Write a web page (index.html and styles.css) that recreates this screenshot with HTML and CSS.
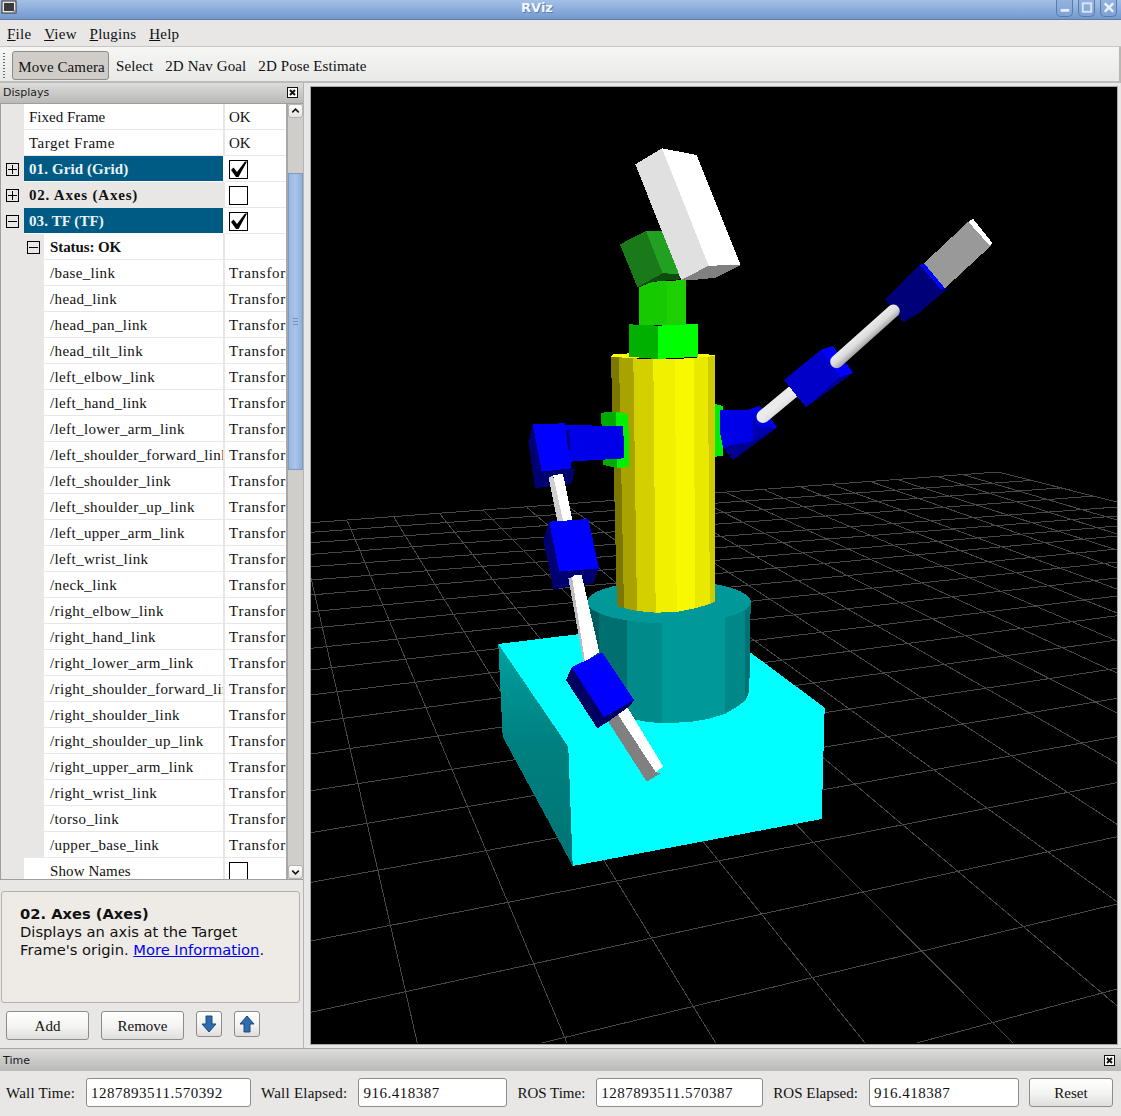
FILE: index.html
```html
<!DOCTYPE html>
<html lang="en">
<head>
<meta charset="utf-8">
<title>RViz</title>
<link rel="stylesheet" href="styles.css">
</head>
<body>
<div class="app">
  <header class="titlebar">
    <svg class="wm-icon" width="17" height="15" viewBox="0 0 17 15"><rect x="1" y="1" width="14" height="12" fill="#e8e8e8" stroke="#333"/><rect x="3" y="3" width="10" height="8" fill="#3a3a3a"/><path d="M15 9l-4 4h4z" fill="#888"/></svg>
    <span class="title-text">RViz</span>
    <div class="wm-buttons">
      <span class="wm-btn"><svg width="16" height="16" viewBox="0 0 16 16"><rect x="4" y="9" width="9" height="3" fill="#e8eef8"/></svg></span>
      <span class="wm-btn"><svg width="16" height="16" viewBox="0 0 16 16"><rect x="4" y="3" width="9" height="9" fill="none" stroke="#dbe5f4" stroke-width="2"/></svg></span>
      <span class="wm-btn"><svg width="16" height="16" viewBox="0 0 16 16"><path d="M4 3l9 9M13 3l-9 9" stroke="#eef3fa" stroke-width="2.6"/></svg></span>
    </div>
  </header>

  <nav class="menubar">
    <span class="menu"><u>F</u>ile</span>
    <span class="menu"><u>V</u>iew</span>
    <span class="menu"><u>P</u>lugins</span>
    <span class="menu"><u>H</u>elp</span>
  </nav>

  <div class="toolbar">
    <span class="grip"></span>
    <span class="tool tool-active">Move Camera</span>
    <span class="tool">Select</span>
    <span class="tool">2D Nav Goal</span>
    <span class="tool">2D Pose Estimate</span>
  </div>

  <main class="main">
    <aside class="left">
      <div class="dock-head"><span>Displays</span><span class="dock-close"><svg width="11" height="11" viewBox="0 0 11 11"><rect x="0.5" y="0.5" width="10" height="10" fill="#fff" stroke="#111"/><path d="M3 3l5 5M8 3l-5 5" stroke="#111" stroke-width="2"/></svg></span></div>
      <div class="tree-wrap">
        <div class="tree">
          <div class="row"><span class="gutter g0"></span><span class="name">Fixed Frame</span><span class="val">OK</span></div>
          <div class="row"><span class="gutter g0"></span><span class="name wide">Target Frame</span><span class="val">OK</span></div>
          <div class="row"><span class="gutter g0"><i class="exp plus"></i></span><span class="name strong sel">01. Grid (Grid)</span><span class="val"><span class="check"><svg width="17" height="17" viewBox="0 0 17 17"><path d="M1 9L3.500 6.500L7 11L15 0.500L17 0.500L8.500 16L6 16Z" fill="#000"/></svg></span></span></div>
          <div class="row"><span class="gutter g0"><i class="exp plus"></i></span><span class="name strong grey wider">02. Axes (Axes)</span><span class="val"><span class="check"></span></span></div>
          <div class="row"><span class="gutter g0"><i class="exp"></i></span><span class="name strong sel">03. TF (TF)</span><span class="val"><span class="check"><svg width="17" height="17" viewBox="0 0 17 17"><path d="M1 9L3.500 6.500L7 11L15 0.500L17 0.500L8.500 16L6 16Z" fill="#000"/></svg></span></span></div>
          <div class="row"><span class="gutter g1"><i class="exp"></i></span><span class="name strong">Status: OK</span><span class="val"></span></div>
          <div class="row"><span class="gutter g2"></span><span class="name">/base_link</span><span class="val">Transform OK</span></div>
          <div class="row"><span class="gutter g2"></span><span class="name">/head_link</span><span class="val">Transform OK</span></div>
          <div class="row"><span class="gutter g2"></span><span class="name">/head_pan_link</span><span class="val">Transform OK</span></div>
          <div class="row"><span class="gutter g2"></span><span class="name">/head_tilt_link</span><span class="val">Transform OK</span></div>
          <div class="row"><span class="gutter g2"></span><span class="name">/left_elbow_link</span><span class="val">Transform OK</span></div>
          <div class="row"><span class="gutter g2"></span><span class="name">/left_hand_link</span><span class="val">Transform OK</span></div>
          <div class="row"><span class="gutter g2"></span><span class="name">/left_lower_arm_link</span><span class="val">Transform OK</span></div>
          <div class="row"><span class="gutter g2"></span><span class="name">/left_shoulder_forward_link</span><span class="val">Transform OK</span></div>
          <div class="row"><span class="gutter g2"></span><span class="name">/left_shoulder_link</span><span class="val">Transform OK</span></div>
          <div class="row"><span class="gutter g2"></span><span class="name">/left_shoulder_up_link</span><span class="val">Transform OK</span></div>
          <div class="row"><span class="gutter g2"></span><span class="name">/left_upper_arm_link</span><span class="val">Transform OK</span></div>
          <div class="row"><span class="gutter g2"></span><span class="name">/left_wrist_link</span><span class="val">Transform OK</span></div>
          <div class="row"><span class="gutter g2"></span><span class="name">/neck_link</span><span class="val">Transform OK</span></div>
          <div class="row"><span class="gutter g2"></span><span class="name">/right_elbow_link</span><span class="val">Transform OK</span></div>
          <div class="row"><span class="gutter g2"></span><span class="name">/right_hand_link</span><span class="val">Transform OK</span></div>
          <div class="row"><span class="gutter g2"></span><span class="name">/right_lower_arm_link</span><span class="val">Transform OK</span></div>
          <div class="row"><span class="gutter g2"></span><span class="name">/right_shoulder_forward_link</span><span class="val">Transform OK</span></div>
          <div class="row"><span class="gutter g2"></span><span class="name">/right_shoulder_link</span><span class="val">Transform OK</span></div>
          <div class="row"><span class="gutter g2"></span><span class="name">/right_shoulder_up_link</span><span class="val">Transform OK</span></div>
          <div class="row"><span class="gutter g2"></span><span class="name">/right_upper_arm_link</span><span class="val">Transform OK</span></div>
          <div class="row"><span class="gutter g2"></span><span class="name">/right_wrist_link</span><span class="val">Transform OK</span></div>
          <div class="row"><span class="gutter g2"></span><span class="name">/torso_link</span><span class="val">Transform OK</span></div>
          <div class="row"><span class="gutter g2"></span><span class="name">/upper_base_link</span><span class="val">Transform OK</span></div>
          <div class="row"><span class="gutter g0"></span><span class="name indent">Show Names</span><span class="val"><span class="check"></span></span></div>
        </div>
        <div class="scrollbar">
          <span class="sb-arrow"><svg width="14" height="12" viewBox="0 0 14 12"><path d="M3.500 7.500L7 4l3.500 3.500" fill="none" stroke="#111" stroke-width="1.600"/></svg></span>
          <span class="sb-track"><span class="sb-thumb"><i class="sb-dots"></i></span></span>
          <span class="sb-arrow"><svg width="14" height="12" viewBox="0 0 14 12"><path d="M3.500 4.500L7 8l3.500-3.500" fill="none" stroke="#111" stroke-width="1.600"/></svg></span>
        </div>
      </div>
      <section class="desc">
        <strong>02. Axes (Axes)</strong><br>
        Displays an axis at the Target<br>
        Frame's origin. <a href="#">More Information</a>.
      </section>
      <div class="actions">
        <button class="btn btn-wide">Add</button>
        <button class="btn btn-wide">Remove</button>
        <button class="btn btn-icon"><svg width="16" height="18" viewBox="0 0 16 18"><path d="M5 1h6v8h4l-7 8-7-8h4z" fill="#2f6cad" stroke="#1d4a7c"/></svg></button>
        <button class="btn btn-icon"><svg width="16" height="18" viewBox="0 0 16 18"><path d="M5 17h6V9h4L8 1 1 9h4z" fill="#2f6cad" stroke="#1d4a7c"/></svg></button>
      </div>
    </aside>
    <span class="splitter"></span>
    <div class="view">
      <svg class="scene" width="806" height="957" viewBox="311 87 806 957">
        <defs>
          <linearGradient id="rod" gradientUnits="userSpaceOnUse" x1="832.400" y1="356.800" x2="841" y2="366.600"><stop offset="0" stop-color="#ebebeb"/><stop offset="0.5" stop-color="#dcdcdc"/><stop offset="1" stop-color="#a0a0a0"/></linearGradient>
          <linearGradient id="baseside" x1="0" y1="0" x2="0" y2="1"><stop offset="0" stop-color="#00a0a0"/><stop offset="0.45" stop-color="#008080"/><stop offset="1" stop-color="#007474"/></linearGradient>
        </defs>
        <path class="grid" d="M311 522.700L998 472M311 532.300L1030 480.500M311 542.700L1060 488M311 554.300L1095 496M311 566.700L1117 507M311 580L1117 516M311 595L1117 526M311 611.700L1117 536M311 628.300L1117 549M311 648.300L1117 562M311 670L1117 578M311 695L1117 596M311 722.700L1117 615.700M311 754L1117 640M311 790.700L1117 668.300M311 832.700L1117 698.300M311 882.300L1117 736.700M311 941L1117 782.700M311 1012.300L1117 836.700M541.700 1043L1117 904M916.700 1043L1117 989M311 578L417.300 1043M347.300 520.700L567 1043M394 517.300L715.700 1043M440 514L865 1043M483.300 510L1013 1043M526.700 507.300L1117 1005.700M566 504.900L1117 901.700M617 500L1117 824.300M653 497.500L1117 763.300M689 494.800L1117 713M725 492.100L1117 673M763 489.300L1117 641M800 486.600L1117 613M831 484.300L1117 589M870 481.400L1117 568M897 479.500L1117 550M937 476.500L1117 534M963 474.600L1117 520M998 472L1117 502"/>

        <!-- base box -->
        <polygon fill="#00ffff" points="498.300,644 588,633 750.700,652.700 824.700,707.700 821.700,819 572.700,866 568.300,746.700"/>
        <polygon fill="url(#baseside)" points="498.300,644 568.300,746.700 572.700,866 502.700,736.700"/>

        <!-- torso base cylinder -->
        <polygon fill="#005c5c" points="588,602 599.300,602 599.300,706.700 592,695"/>
        <polygon fill="#006f6f" points="599.300,602 627.300,602 627.300,718 612,712 599.300,706.700"/>
        <polygon fill="#008a8a" points="627.300,602 661.700,602 661.700,723.300 645,721.500 627.300,718"/>
        <polygon fill="#009999" points="661.700,602 725,602 725,714 708,719 690,722 661.700,723.300"/>
        <polygon fill="#008888" points="725,602 745,602 745,701 735,708 725,714"/>
        <polygon fill="#007272" points="745,602 750.700,602 749.300,691.700 745,701"/>
        <ellipse fill="#009898" cx="669" cy="602" rx="82" ry="21.500"/>

        <!-- yellow torso -->
        <polygon fill="#ffff00" points="611,356.700 613,354 640,353 690,353 715,355 715,357 611,358"/>
        <polygon fill="#7b7700" points="611,356.700 619,357.300 624,608 617,606"/>
        <polygon fill="#a8a300" points="619,357.300 633.300,358.300 637,611 624,608"/>
        <polygon fill="#d4d000" points="633.300,358.300 653.300,359.300 655.700,612.700 637,611"/>
        <polygon fill="#f0f000" points="653.300,359.300 675,359.300 676.700,612 655.700,612.700"/>
        <polygon fill="#f8f800" points="675,359.300 694,357.700 695,608.300 676.700,612"/>
        <polygon fill="#e8e800" points="694,357.700 707.700,356.700 710,604 695,608.300"/>
        <polygon fill="#cccc00" points="707.700,356.700 715,356 715,601.700 710,604"/>

        <!-- neck / head -->
        <polygon fill="#00b000" points="629,324.300 657.700,325.700 657.700,359 629,356.700"/>
        <polygon fill="#00ff00" points="657.700,325.700 698,324 698,356.700 657.700,359"/>
        <polygon fill="#17c900" points="639,287.300 653,281.700 667,281 667,325 639,325"/>
        <polygon fill="#1dd100" points="667,281 685.700,280 685.700,325 667,325"/>
        <polygon fill="#0f4a0f" points="637.300,287.300 662.700,273.300 680,274 680,279.300 653,281.700"/>
        <polygon fill="#1a7a1a" points="620,244.300 646,231 662.700,273.300 637.300,287.300"/>
        <polygon fill="#22a022" points="646,231 662.700,231 680,274 662.700,273.300"/>
        <polygon fill="#808080" points="681.300,280 708.700,265.700 740.700,265 716,277.700 693,280"/>
        <polygon fill="#e0e0e0" points="635.300,164.300 662,148.300 708.700,265.700 681.300,280"/>
        <polygon fill="#ffffff" points="662,148.300 696.700,155 740.700,265 708.700,265.700"/>

        <!-- right-hand arm of the picture -->
        <polygon fill="#00ee00" points="715,404 722.700,406 722.700,456 715,456.700"/>
        <polygon fill="#0000e8" points="720,410 747,410 760,406 777,427 733,460 723,447 720,433"/>
        <polygon fill="#0000b0" points="753,413 758,427 776.700,427.700 753.300,441.700"/>
        <polygon fill="#000090" points="724,446.700 753.300,441 776.700,427.700 733.300,460"/>
        <line class="rod" x1="763" y1="416.500" x2="795" y2="390"/>
        <polygon fill="#000090" points="806,407.300 853.300,372.700 840,377"/>
        <polygon fill="#0000ff" points="820.700,350 832.700,346 853.300,372.700 840,377"/>
        <polygon fill="#0000c8" points="784,380 820.700,350 840,377 806,407.300"/>
        <polygon fill="#000078" points="885,299.300 920,265 946.700,290 953,282 946,290 919,313 903.300,322.300 898,315"/>
        <polygon fill="#999999" points="924,263.300 968.300,221.700 991.700,245 945,288.300"/>
        <polygon fill="#0000ff" points="920,265 924,263.300 945,288.300 941,290"/>
        <polygon fill="#ffffff" points="968.300,221.700 973.300,219 992.700,243.300 990,246"/>
        <line class="rod" x1="836.700" y1="361.700" x2="893.300" y2="311"/>

        <!-- left-hand arm of the picture -->
        <polygon fill="#00aa00" points="601,412.700 616,411.700 617,468 603.300,465"/>
        <polygon fill="#00f000" points="616,411.700 628.300,414.300 629,466.700 616.700,468.300"/>
        <polygon fill="#0000e8" points="560,425 623.300,426 624,458.300 565,462"/>
        <polygon fill="#000070" points="532.700,424.300 528.300,441.700 535,488.300 571.700,483.300 575,468.300 541.700,471.700"/>
        <polygon fill="#0000ff" points="532.700,424.300 565,423.300 571.700,468.300 541.700,471.700"/>
        <polygon fill="#000080" points="566,430 569,430 570.500,450 568,450"/>
        <polygon fill="#cfcfcf" points="548.500,477 553,476 565,525 558,525"/>
        <polygon fill="#ffffff" points="553,475 563,474 572.700,522 564,525"/>
        <polygon fill="#000070" points="549.300,521.700 543.300,540 553.300,589.300 559.300,571.700"/>
        <polygon fill="#000070" points="559.300,571.700 599,568.300 593.300,583.300 553.300,589.300"/>
        <polygon fill="#0000ff" points="549.300,521.700 588.300,519 599,568.300 559.300,571.700"/>
        <polygon fill="#bdbdbd" points="568.300,578 573,577 586,660 584,665"/>
        <polygon fill="#ffffff" points="572,577 574,575.300 581.700,575 599.300,652 585,662"/>
        <polygon fill="#808080" points="608.300,721.700 615,710 655.700,772.300 661,773 646.700,781.700"/>
        <polygon fill="#ffffff" points="615,710 626.700,706 663.300,766.700 655.700,772.300"/>
        <polygon fill="#000060" points="597.300,728.300 604,717.300 634,700 630,706 608,721.700"/>
        <polygon fill="#000060" points="571.700,667.300 566,680 597.300,728.300 604,717.300"/>
        <polygon fill="#0000ff" points="571.700,667.300 602.300,652.300 634,700 604,717.300"/>
      </svg>
    </div>
  </main>

  <section class="time">
    <div class="dock-head time-head"><span>Time</span><span class="dock-close"><svg width="11" height="11" viewBox="0 0 11 11"><rect x="0.5" y="0.5" width="10" height="10" fill="#fff" stroke="#111"/><path d="M3 3l5 5M8 3l-5 5" stroke="#111" stroke-width="2"/></svg></span></div>
    <div class="time-row">
      <span class="tlabel wall">Wall Time:</span><span class="field f-wall">1287893511.570392</span>
      <span class="tlabel wall">Wall Elapsed:</span><span class="field f-elapsed">916.418387</span>
      <span class="tlabel">ROS Time:</span><span class="field f-rost">1287893511.570387</span>
      <span class="tlabel">ROS Elapsed:</span><span class="field f-rose">916.418387</span>
      <button class="btn btn-reset">Reset</button>
    </div>
  </section>
</div>
</body>
</html>
```

FILE: styles.css
```css
* { box-sizing: border-box; }
html, body { margin: 0; padding: 0; }
body { background: #e8e7e5; color: #111; font-family: "Liberation Serif", serif; font-size: 15px; overflow: hidden; }
.app { width: 1121px; height: 1116px; display: flex; flex-direction: column; overflow: hidden; }

.titlebar { height: 20px; flex: none; display: flex; align-items: flex-start; justify-content: space-between; position: relative; background: linear-gradient(#a4c0e6, #7399cf); border-bottom: 1px solid #5f7fa9; }
.wm-icon { margin-left: 1px; }
.title-text { position: absolute; left: 0; right: 47px; text-align: center; font: bold 13px/16px "DejaVu Sans", sans-serif; color: #f4f7fb; text-shadow: 1px 1px 0 #5d7fb0; }
.wm-buttons { display: flex; gap: 5px; margin-right: 4px; }
.wm-btn { width: 17px; height: 17px; border: 1px solid #5a7cab; border-top: none; border-radius: 0 0 5px 5px; background: linear-gradient(#94b3de, #7fa2d5); display: flex; align-items: center; justify-content: center; }

.menubar { height: 27px; flex: none; display: flex; align-items: center; gap: 12.8px; padding: 2px 0 0 7px; background: #e8e7e5; border-bottom: 1px solid #c8c7c3; line-height: 17px; letter-spacing: 0.25px; }
.menu { display: block; }

.toolbar { height: 36px; flex: none; display: flex; align-items: center; gap: 12px; padding: 4px 0 0 3px; letter-spacing: 0.1px; background: linear-gradient(#f6f6f4, #e9e9e7); border-right: 2px solid #b8b7b3; border-bottom: 2px solid #bdbcb8; }
.grip { width: 2px; height: 26px; margin-right: -5px; background: repeating-linear-gradient(#6a6a68 0, #6a6a68 1px, transparent 1px, transparent 3px); }
.tool { display: block; line-height: 17px; }
.tool-active { width: 97px; height: 29px; margin-bottom: 1px; padding-left: 2px; line-height: 31px; text-align: center; white-space: nowrap; background: #d0cdc9; border: 1px solid #8f8c88; border-radius: 3px; margin-right: -5px; }

.main { flex: 1; min-height: 0; display: flex; }
.left { width: 304px; flex: none; display: flex; flex-direction: column; border-right: 1px solid #b5b4b0; }
.dock-head { height: 20px; flex: none; display: flex; justify-content: space-between; align-items: center; padding: 0 5px 1px 3px; background: linear-gradient(#dcdcda, #b9b9b7); font: 11px/14px "DejaVu Sans", sans-serif; color: #1a1a1a; }
.dock-close { display: flex; }

.tree-wrap { height: 777px; flex: none; display: flex; border-top: 1px solid #a09f9b; border-bottom: 1px solid #a09f9b; border-left: 1px solid #a09f9b; }
.tree { width: 287px; flex: none; overflow: hidden; background: #fff; border-right: 2px solid #a8a7a3; }
.row { height: 26px; display: flex; }
.gutter { flex: none; background: #e8e7e5; display: flex; align-items: center; position: relative; }
.g0 { width: 23px; padding-left: 5px; }
.g1 { width: 43px; padding-left: 26px; }
.g2 { width: 43px; }
.exp { display: block; width: 13px; height: 13px; border: 1px solid #000; background: linear-gradient(#000, #000) center / 9px 1px no-repeat; }
.exp.plus { background: linear-gradient(#000, #000) center / 9px 1px no-repeat, linear-gradient(#000, #000) center / 1px 9px no-repeat; }
.name { flex: 1; min-width: 0; overflow: hidden; white-space: nowrap; padding: 0 0 0 5px; line-height: 26px; background: #fff; border-right: 2px solid #e8e7e5; border-bottom: 1px solid #e8e7e5; }
.g2 + .name { padding-left: 6px; letter-spacing: 0.37px; }
.wide { letter-spacing: 0.5px; }
.indent { padding-left: 26px; letter-spacing: 0.1px; }
.strong { font-weight: bold; letter-spacing: 0.1px; }
.g1 + .name { padding-left: 6px; letter-spacing: -0.1px; }
.wider { letter-spacing: 0.8px; }
.sel { background: #005b84; color: #ecf2f6; border-bottom-color: #fff; border-right-color: #fff; }
.grey { background: #e8e7e5; }
.val { width: 61px; flex: none; overflow: hidden; white-space: nowrap; padding-left: 4px; line-height: 26px; background: #fff; border-bottom: 1px solid #e8e7e5; }
.g2 ~ .val { letter-spacing: 0.75px; }
.check { display: block; width: 19px; height: 19px; margin-top: 4px; border: 1px solid #000; background: #fff; }
.check svg { display: block; margin: 0; }

.scrollbar { width: 15px; flex: none; display: flex; flex-direction: column; background: #cfcecb; }
.sb-arrow { height: 14px; flex: none; display: flex; align-items: center; background: linear-gradient(#fff, #e4e3e0); border: 1px solid #b5b4b0; border-radius: 3px; }
.sb-track { flex: 1; padding-top: 55px; padding-bottom: 395px; display: flex; }
.sb-thumb { flex: 1; background: linear-gradient(90deg, #98b8e2, #a9c4e8 50%, #8dafdc); border: 1px solid #7c9cc8; display: flex; align-items: center; justify-content: center; }
.sb-dots { display: block; width: 5px; height: 8px; background: repeating-linear-gradient(#6e8fc0 0, #6e8fc0 1px, transparent 1px, transparent 3px); }

.desc { height: 112px; flex: none; margin: 11px 3px 0 1px; padding: 13px 0 0 18px; background: #eeebe7; border: 1px solid #b3b1ad; border-radius: 3px; font: 14.7px/18px "DejaVu Sans", sans-serif; color: #111; }
.desc a { color: #0000ee; }

.actions { display: flex; align-items: flex-start; padding: 8px 0 0 6px; }
.btn { font: 15px "Liberation Serif", serif; color: #111; height: 29px; padding: 2px 0 0; background: linear-gradient(#fff 0, #f3f3f1 55%, #dededc 100%); border: 1px solid #8d8c88; border-radius: 3px; }
.btn-wide { width: 83px; margin-right: 12px; }
.btn-icon { width: 26px; height: 26px; margin-right: 12px; padding: 0; display: flex; align-items: center; justify-content: center; }

.splitter { width: 6px; flex: none; background: #e8e7e5; }
.view { flex: 1; min-width: 0; padding: 4px 2px 2px 1px; background: #e8e7e5; }
.scene { display: block; background: #000; outline: 1px solid #a8a7a3; shape-rendering: crispEdges; }
.grid { fill: none; stroke: #484848; stroke-width: 1; }
.rod { stroke: url(#rod); stroke-width: 13; stroke-linecap: round; shape-rendering: geometricPrecision; }

.time { flex: none; height: 68px; border-top: 1px solid #a8a7a3; }
.time-head { height: 22px; padding: 1px 6px 0 3px; font-size: 11px; }
.time-row { height: 45px; display: flex; align-items: flex-start; padding: 7px 0 0 6px; background: #e8e7e5; }
.tlabel { line-height: 31px; margin-right: 11px; white-space: nowrap; }
.wall { letter-spacing: 0.23px; }
.field { height: 29px; line-height: 29px; padding-left: 4px; margin-right: 10px; letter-spacing: 0.5px; background: #fff; border: 1px solid #8d8c88; border-radius: 3px; }
.f-wall { width: 165px; }
.f-elapsed { width: 149px; }
.f-rost { width: 167px; }
.f-rose { width: 150px; }
.btn-reset { width: 84px; }
```
